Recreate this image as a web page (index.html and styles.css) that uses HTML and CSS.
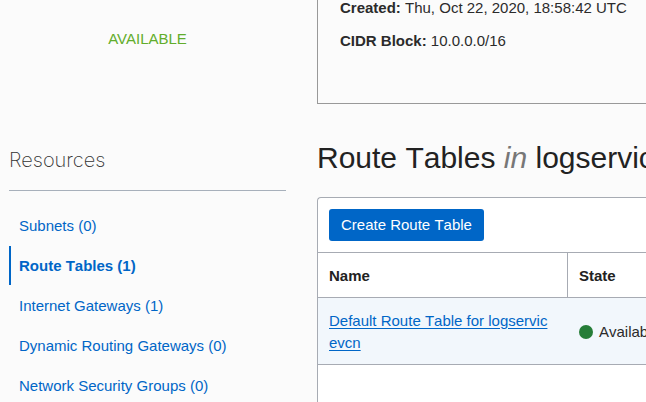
FILE: index.html
```html
<!DOCTYPE html>
<html lang="en">
<head>
<meta charset="utf-8">
<title>Route Tables</title>
<link rel="stylesheet" href="styles.css">
</head>
<body>
<div class="page">
  <aside class="sidebar">
    <div class="status">AVAILABLE</div>
    <h2 class="resources-title">Resources</h2>
    <nav class="resources">
      <a class="resource" href="#subnets">Subnets (0)</a>
      <a class="resource active" href="#route-tables" aria-current="page">Route Tables (1)</a>
      <a class="resource" href="#internet-gateways">Internet Gateways (1)</a>
      <a class="resource" href="#dynamic-routing">Dynamic Routing Gateways (0)</a>
      <a class="resource" href="#security-groups">Network Security Groups (0)</a>
    </nav>
  </aside>
  <main class="content">
    <section class="details">
      <div><strong>Created:</strong> Thu, Oct 22, 2020, 18:58:42 UTC</div>
      <div><strong>CIDR Block:</strong> 10.0.0.0/16</div>
    </section>
    <h1 class="title">Route Tables <em>in</em> logservicevcn</h1>
    <section class="panel">
      <div class="toolbar"><button class="create" type="button">Create Route Table</button></div>
      <table class="routes">
        <thead>
          <tr><th class="name" scope="col">Name</th><th scope="col">State</th></tr>
        </thead>
        <tbody>
          <tr>
            <td class="name"><a href="#default">Default Route Table for logservicevcn</a></td>
            <td><span class="state"><span class="dot"></span>Available</span></td>
          </tr>
        </tbody>
      </table>
    </section>
  </main>
</div>
</body>
</html>
```
FILE: styles.css
```css
* { box-sizing: border-box; }

body {
  margin: 0;
  overflow: hidden;
  background: #fbfbfb;
  color: #2b2b2b;
  font: 15px/22px "Liberation Sans", Arial, sans-serif;
  font-kerning: none;
}

a { color: #0066c7; }

.page {
  display: grid;
  grid-template-columns: 277px minmax(0, 1fr);
  gap: 31px;
  min-height: 100vh;
  padding-left: 9px;
}

.status {
  padding-top: 28px;
  text-align: center;
  color: #62ad2b;
  font-kerning: normal;
}

.resources-title {
  margin: 96px 0 0;
  padding-bottom: 16px;
  border-bottom: 1px solid #a7b0bb;
  color: #333;
  font: 200 20px/28px Inter, "Liberation Sans", sans-serif;
}

.resources {
  display: grid;
  gap: 1px;
  padding-top: 15px;
}

.resource {
  padding-left: 8px;
  border-left: 2px solid transparent;
  line-height: 39px;
  text-decoration: none;
}

.resource.active {
  border-color: #0066c7;
  font-weight: bold;
}

.content {
  display: flex;
  flex-direction: column;
  overflow: hidden;
}

.details {
  display: grid;
  gap: 17px;
  padding: 0 0 54px 22px;
  border: solid #999;
  border-width: 0 0 1px 1px;
  line-height: 16px;
  white-space: nowrap;
}

.title {
  margin: 36px 0 21px;
  color: #222;
  font-size: 30px;
  font-weight: normal;
  line-height: 36px;
  white-space: nowrap;
}

.title em { color: #777; }

.panel {
  flex: 1;
  border: solid #a7abb3;
  border-width: 1px 0 0 1px;
  border-top-left-radius: 4px;
  background: #fff;
}

.toolbar {
  padding: 11px;
  border-bottom: 1px solid #a7abb3;
}

.create {
  display: block;
  height: 32px;
  padding: 0 12px;
  border: 0;
  border-radius: 3px;
  background: #0066c7;
  color: #fff;
  font: inherit;
  font-kerning: none;
}

.routes {
  width: 100%;
  table-layout: fixed;
  border-collapse: separate;
  border-spacing: 0;
}

.routes th,
.routes td {
  padding: 12px 11px 10px;
  border-bottom: 1px solid #a7abb3;
  text-align: left;
  white-space: nowrap;
}

.routes th { color: #222; }
.routes .name { width: 250px; }
.routes th.name { border-right: 1px solid #a7abb3; }

.routes td { background: #f2f7fc; }

.routes td.name {
  padding-right: 15px;
  white-space: normal;
  word-break: break-all;
}

.routes td a { text-underline-offset: 2px; }

.state {
  display: flex;
  align-items: center;
  gap: 6px;
}

.dot {
  flex: none;
  width: 14px;
  height: 14px;
  border-radius: 50%;
  background: #267d38;
}
```
